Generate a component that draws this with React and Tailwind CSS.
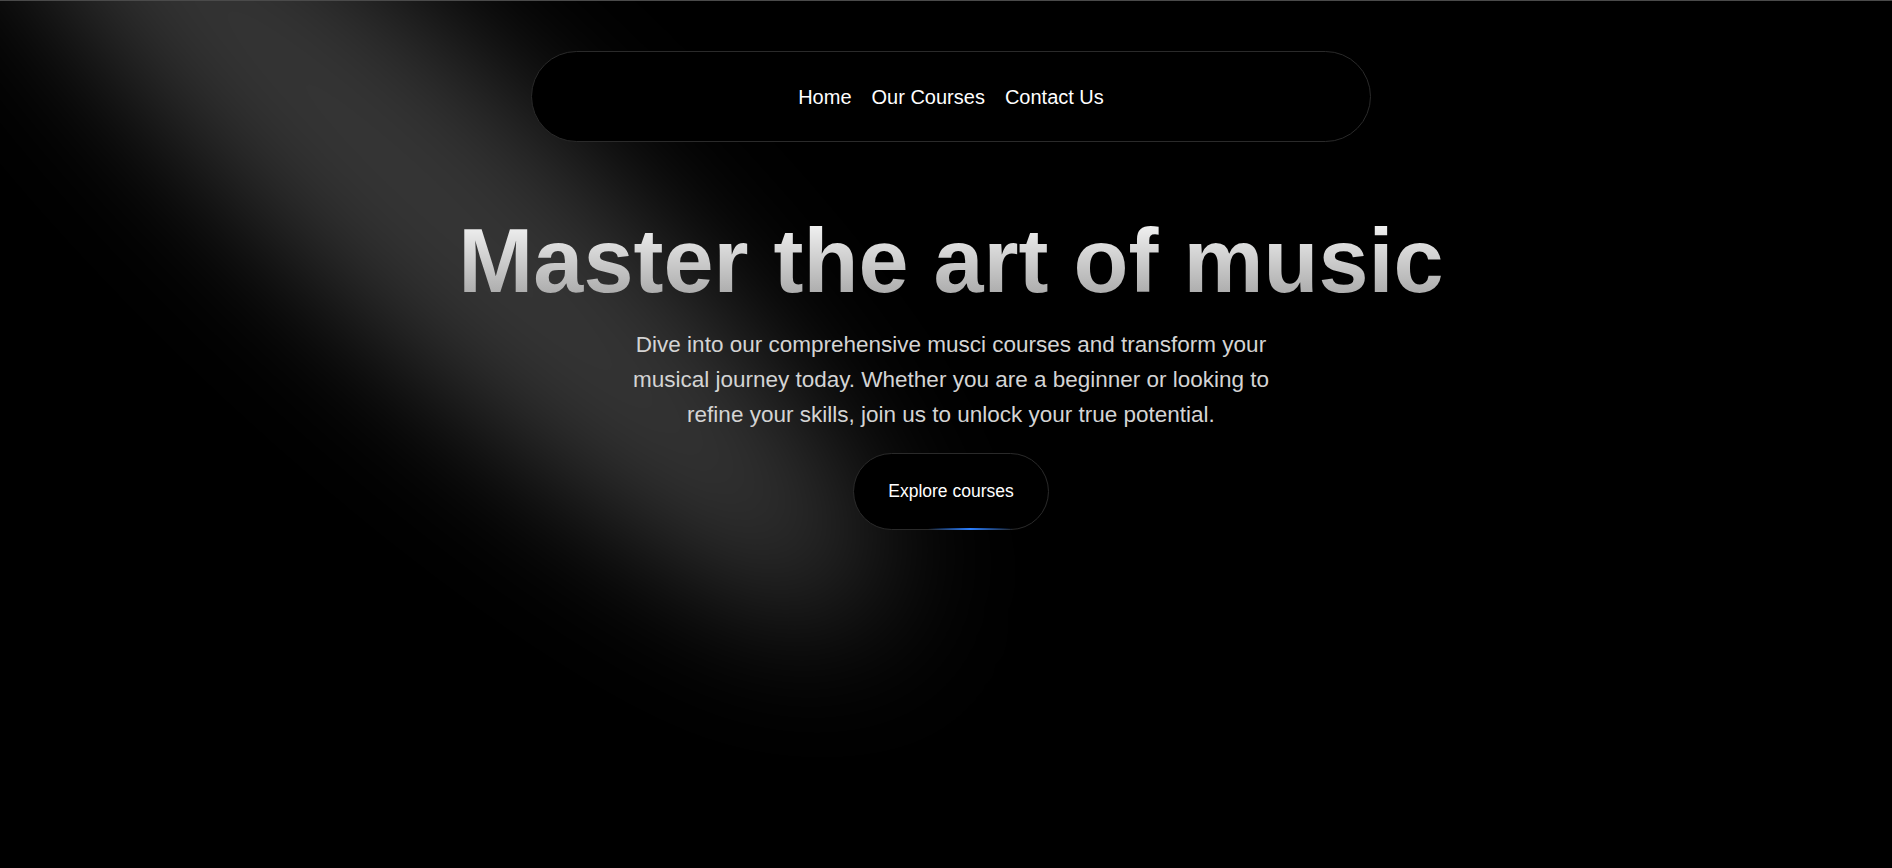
import React from 'react';

function Spotlight() {
  return (
    <svg
      className="pointer-events-none absolute inset-0 h-full w-full"
      viewBox="0 0 1892 868"
      preserveAspectRatio="none"
      fill="none"
    >
      <defs>
        <filter id="spot-blur" x="-50%" y="-50%" width="200%" height="200%">
          <feGaussianBlur stdDeviation="70" />
        </filter>
      </defs>
      <g filter="url(#spot-blur)">
        <ellipse
          cx="420"
          cy="190"
          rx="620"
          ry="135"
          transform="rotate(43 420 190)"
          fill="white"
          fillOpacity="0.21"
        />
      </g>
    </svg>
  );
}

export default function App() {
  return (
    <div className="relative h-[868px] w-full overflow-hidden border-t border-[#4a4a4a] bg-black font-['Liberation_Sans',Arial,sans-serif]">
      {/* Spotlight beam */}
      <Spotlight />

      <div className="relative z-10 flex flex-col items-center pl-[10px] pt-[50px]">
        {/* Nav */}
        <nav className="flex h-[91px] w-[840px] items-center justify-center gap-5 rounded-full border border-[#2a2a2a] bg-black text-[20px] text-white">
          <a href="#">Home</a>
          <a href="#">Our Courses</a>
          <a href="#">Contact Us</a>
        </nav>

        {/* Hero */}
        <h1 className="mt-[74px] bg-gradient-to-b from-neutral-50 to-neutral-400 bg-clip-text text-center text-[90px] font-bold leading-none text-transparent">
          Master the art of music
        </h1>
        <p className="mt-[21px] max-w-[660px] text-center text-[22.5px] leading-[35px] text-neutral-300">
          Dive into our comprehensive musci courses and transform your musical journey today. Whether you are a beginner or looking to refine your skills, join us to unlock your true potential.
        </p>

        <button className="relative mt-[21px] flex h-[77px] w-[196px] items-center justify-center rounded-full border border-[#2a2a2a] bg-black text-[17.5px] text-white">
          Explore courses
          <span className="absolute -bottom-px left-[38%] h-[2px] w-[44%] bg-gradient-to-r from-transparent via-blue-500 to-transparent"></span>
        </button>
      </div>
    </div>
  );
}
